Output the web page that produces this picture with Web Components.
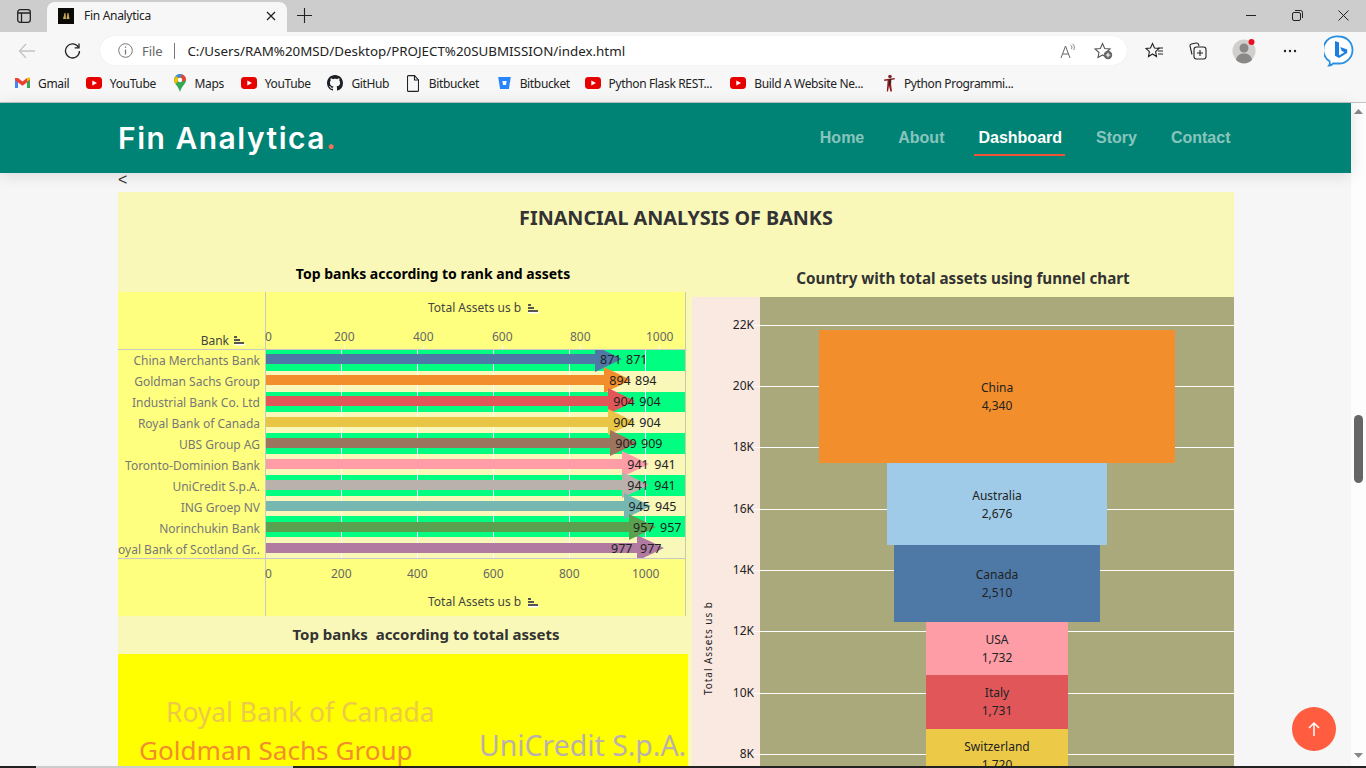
<!DOCTYPE html>
<html lang="en"><head><meta charset="utf-8"><title>Fin Analytica</title>
<style>
html,body{margin:0;padding:0;width:1366px;height:768px;overflow:hidden;background:#f6f6f6}
fa-app{display:block;width:1366px;height:768px}
</style></head><body>
<fa-app>
  <fa-tabstrip></fa-tabstrip>
  <fa-toolbar></fa-toolbar>
  <fa-bookmarks></fa-bookmarks>
  <fa-viewport>
    <fa-site-header></fa-site-header>
    <fa-dashboard></fa-dashboard>
  </fa-viewport>
  <fa-taskline></fa-taskline>
</fa-app>
<script>
const define=(name,css,html)=>{customElements.define(name,class extends HTMLElement{
  constructor(){super();const r=this.attachShadow({mode:'open'});r.innerHTML=`<style>${css}</style>${typeof html==='function'?html():html}`;}
});};
const UI='"Noto Sans","Open Sans",sans-serif';
const yt=`<svg width="16" height="16" viewBox="0 0 16 16"><rect y="2" width="16" height="12" rx="3.4" fill="#e60000"/><path d="M6.3 5.4 11 8l-4.7 2.6z" fill="#fff"/></svg>`;
const gmail=`<svg width="15" height="16" viewBox="0 0 15 16"><path d="M0 4v9h3V6.5z" fill="#4285f4"/><path d="M15 4v9h-3V6.5z" fill="#34a853"/><path d="M12 3 7.5 6.6 3 3 0 3v2l3 2.4 4.5 3.4 4.5-3.4L15 5V3z" fill="#ea4335"/><path d="M12 3.1v3.5L15 4.4V3.3c0-.9-2-1-3-.2z" fill="#fbbc04"/></svg>`;
const maps=`<svg width="14" height="18" viewBox="0 0 14 18"><path d="M7 0a6 6 0 0 1 6 6c0 4-4.500 6-6 12C5.500 12 1 10 1 6a6 6 0 0 1 6-6z" fill="#34a853"/><path d="M3 2 1 6c0 1.500.8 2.800 1.700 4l4-5z" fill="#fbbc04"/><path d="M3 2a6 6 0 0 1 6-1.700L6.500 4z" fill="#4285f4"/><path d="M9 .3A6 6 0 0 1 13 6L9 8 7.500 4z" fill="#ea4335"/><circle cx="7" cy="6" r="2.200" fill="#fff"/></svg>`;
const gh=`<svg width="16" height="16" viewBox="0 0 16 16"><path fill="#1b1f23" d="M8 0C3.580 0 0 3.580 0 8c0 3.540 2.290 6.530 5.470 7.590.4.070.55-.17.55-.38 0-.19-.01-.82-.01-1.490-2.010.37-2.530-.49-2.690-.94-.09-.23-.48-.94-.82-1.130-.28-.15-.68-.52-.01-.53.63-.01 1.080.58 1.230.82.72 1.210 1.870.87 2.330.66.07-.52.28-.87.51-1.070-1.780-.2-3.640-.89-3.640-3.950 0-.87.31-1.590.82-2.150-.08-.2-.36-1.020.08-2.120 0 0 .67-.21 2.200.82.64-.18 1.320-.27 2-.27.68 0 1.360.09 2 .27 1.530-1.040 2.200-.82 2.200-.82.44 1.100.16 1.920.08 2.120.51.56.82 1.270.82 2.150 0 3.070-1.870 3.750-3.650 3.950.29.25.54.73.54 1.480 0 1.070-.01 1.930-.01 2.200 0 .21.15.46.55.38A8.013 8.013 0 0 0 16 8c0-4.420-3.580-8-8-8z"/></svg>`;
const doc=`<svg width="12" height="17" viewBox="0 0 12 17" fill="none" stroke="#222" stroke-width="1.100"><path d="M1.500.6h6l4 4.400v10.400a1 1 0 0 1-1 1h-9a1 1 0 0 1-1-1V1.600a1 1 0 0 1 1-1z"/><path d="M7.500.6v4.400h4"/></svg>`;
const bb=`<svg width="13" height="14" viewBox="0 0 13 14"><path d="M.2 1h12.600l-1.900 12H2.100z" fill="#2684ff"/><path d="M4.400 5h4.200l-.6 4H5z" fill="#fff"/></svg>`;
const fig=`<svg width="13" height="18" viewBox="0 0 13 18"><circle cx="7" cy="2.500" r="1.800" fill="#7a2a2a"/><path d="M1 5.500 6 4.700l5.500-.7.500 1.200-3.700.8-.2 4.500L9 17.500H7.400L6 12l-1 5.500H3.800l.8-11L1.300 7z" fill="#8c1d1d"/><path d="M6.500 5h1.400L7 11H5.800z" fill="#222"/></svg>`;

define('fa-tabstrip',`
:host{display:flex;height:32px;background:#cdcdcd;font:12px ${UI};color:#222;position:relative;align-items:flex-end}
.side{width:47px;height:32px;display:flex;align-items:center;justify-content:center}
.tab{width:240px;height:30px;background:#f7f7f7;border-radius:8px 8px 0 0;display:flex;align-items:center;box-sizing:border-box;padding:0 0 3px 11px}
.fav{width:16px;height:16px;background:#0c0a06;display:flex;align-items:center;justify-content:center;margin-right:10px}
.t{flex:1;letter-spacing:-.3px}
.x{width:21px;display:flex;justify-content:flex-start}
.plus{width:34px;height:32px;display:flex;align-items:center;justify-content:center;padding-bottom:2px;box-sizing:border-box}
.sp{flex:1}
.win{display:flex;height:32px;align-items:center;width:120px;justify-content:space-between;padding:0 17px 2px 0;box-sizing:border-box}
`,`
<div class="side"><svg width="16" height="16" viewBox="0 0 16 16" fill="none" stroke="#222" stroke-width="1.300"><rect x="1.700" y="1.700" width="12.600" height="12.600" rx="2.500"/><path d="M2 5h12M5.500 5v9"/></svg></div>
<div class="tab"><span class="fav"><svg width="8" height="8" viewBox="0 0 8 8"><path d="M1 7 2.500 1h1L4 7zM4.500 7 5.500 1h1L7.500 7z" fill="#c9a95a"/></svg></span><span class="t">Fin Analytica</span><span class="x"><svg width="10" height="10" viewBox="0 0 10 10" stroke="#222" stroke-width="1.300"><path d="M1 1l8 8M9 1l-8 8"/></svg></span></div>
<div class="plus"><svg width="15" height="15" viewBox="0 0 15 15" stroke="#222" stroke-width="1.100"><path d="M7.500 0v15M0 7.500h15"/></svg></div>
<div class="sp"></div>
<div class="win">
<svg width="10" height="10" viewBox="0 0 10 10" stroke="#222"><path d="M0 5.500h10"/></svg>
<svg width="11" height="11" viewBox="0 0 11 11" fill="none" stroke="#222"><rect x=".5" y="2.500" width="8" height="8" rx="1.500"/><path d="M3 .5h5.500a2 2 0 0 1 2 2V8"/></svg>
<svg width="11" height="11" viewBox="0 0 11 11" stroke="#222"><path d="M.5.500l10 10M10.500.500l-10 10"/></svg>
</div>`);

define('fa-toolbar',`
:host{display:flex;height:34px;background:#f7f7f7;align-items:center;font:13px ${UI};color:#222;box-sizing:border-box;padding-top:3px}
.b{display:flex;align-items:center;justify-content:center;flex:none}
.addr{width:1027px;height:29px;background:#fff;border-radius:15px;display:flex;align-items:center;box-shadow:0 0 1px rgba(0,0,0,.12);margin:0 17px 0 10px;box-sizing:border-box;padding-left:18px;flex:none}
.file{color:#666;margin-left:9px;font-size:13px;letter-spacing:-.1px}
.bar{width:1px;height:16px;background:#777;margin:0 12px}
.url{flex:1;font-size:13.350px;white-space:nowrap}
.end{display:flex;gap:18px;padding-right:14px;align-items:center}
.right{display:flex;align-items:center}
`,`
<span class="b" style="width:54px"><svg width="18" height="16" viewBox="0 0 18 16" fill="none" stroke="#c4c4c4" stroke-width="1.300"><path d="M17 8H1.500M8 1 1.500 8 8 15"/></svg></span>
<span class="b" style="width:36px"><svg width="17" height="17" viewBox="0 0 17 17" fill="none" stroke="#222" stroke-width="1.300"><path d="M14.600 5.500A7 7 0 1 0 15.500 9"/><path d="M15 1.500v4.300h-4.300"/></svg></span>
<div class="addr">
<svg width="15" height="15" viewBox="0 0 15 15" fill="none" stroke="#777"><circle cx="7.500" cy="7.500" r="6.800"/><path d="M7.500 6.500v5" stroke-width="1.300"/><path d="M7.500 3.500v1.300" stroke-width="1.300"/></svg>
<span class="file">File</span><span class="bar"></span><span class="url">C:/Users/RAM%20MSD/Desktop/PROJECT%20SUBMISSION/index.html</span>
<span class="end">
<svg width="16" height="16" viewBox="0 0 16 16" fill="none" stroke="#666" stroke-width="1"><path d="M1 15 5.500 3 10 15M2.800 11h5.500"/><path d="M10.500 2c1.500.8 1.800 2.500 1 4M12.500.8c2 1.400 2.500 4 1.200 6.200" stroke-width=".8"/></svg>
<svg width="19" height="18" viewBox="0 0 19 18" fill="none" stroke="#555" stroke-width="1.100"><path d="M8.500 1.500 10.700 6.500 16 7 12 10.500 13 15.500 8.500 13 4 15.500 5 10.500 1 7 6.300 6.500z"/><circle cx="14" cy="13" r="4.200" fill="#666" stroke="none"/><path d="M14 10.800v4.400M11.800 13h4.400" stroke="#fff"/></svg>
</span></div>
<div class="right">
<span class="b" style="width:20px"><svg width="19" height="18" viewBox="0 0 19 18" fill="none" stroke="#222" stroke-width="1.100"><path d="M7.500 1.500 9.500 6 14 6.500 10.600 9.700 11.500 14.500 7.500 12 3.500 14.500 4.400 9.700 1 6.500 5.500 6z"/><path d="M13 9h5M13 12h5M13 6h5"/></svg></span>
<span class="b" style="width:20px;margin-left:23px"><svg width="19" height="19" viewBox="0 0 19 19" fill="none" stroke="#222" stroke-width="1.100"><path d="M4 13.500 2 5c-.2-1 .4-1.800 1.300-2l5-1c1-.2 1.800.3 2.200 1.200L11 5"/><rect x="6" y="6" width="12" height="12" rx="2.500" fill="#f7f7f7"/><path d="M12 9v6M9 12h6"/></svg></span>
<span class="b" style="width:24px;margin-left:25px;position:relative"><svg width="24" height="26" viewBox="0 0 24 26"><circle cx="12" cy="13" r="11.500" fill="#d1cfcd"/><circle cx="12" cy="10" r="4.500" fill="#8a8886"/><path d="M4 22c1-5 4-6.500 8-6.500s7 1.500 8 6.500a11 11 0 0 1-16 0z" fill="#8a8886"/><circle cx="19.500" cy="4" r="3" fill="#e81123"/></svg></span>
<span class="b" style="width:20px;margin-left:24px"><svg width="14" height="4" viewBox="0 0 14 4" fill="#222"><circle cx="2" cy="2" r="1.200"/><circle cx="7" cy="2" r="1.200"/><circle cx="12" cy="2" r="1.200"/></svg></span>
<span class="b" style="width:30px;margin-left:24px"><svg width="30" height="32" viewBox="0 0 30 32"><path d="M15 1.500a13.500 13.500 0 0 1 13.500 13.500c0 7.500-6 13.500-13.500 13.500H9c-1 1.500-2.500 2.200-4 2.200 1-1.200 1-3 .5-4.500A13.500 13.500 0 0 1 15 1.500z" fill="#fff" stroke="#2a8fe0" stroke-width="1.800"/><path d="M11 6l4 1.500v13l5.500-3.200-2.700-1.300-1.600-4 7 2.500v3.500L15 23l-4-2.300z" fill="#1a7fe0"/></svg></span>
</div>`);

const marks=[[gmail,'Gmail'],[yt,'YouTube'],[maps,'Maps'],[yt,'YouTube'],[gh,'GitHub'],[doc,'Bitbucket','margin-left:1px;gap:10px'],[bb,'Bitbucket','margin-left:2px;gap:9px'],[yt,'Python Flask REST...','margin-left:-2px'],[yt,'Build A Website Ne...','margin-left:1.400px'],[fig,'Python Programmi...','margin-left:3px']];
define('fa-bookmarks',`
:host{display:flex;height:37px;background:#f7f7f7;align-items:center;padding:0 0 2px 15px;box-sizing:border-box;font:12px ${UI};color:#222;gap:16.700px;border-bottom:1px solid #c4c4c4;letter-spacing:-.35px}
.i{display:flex;align-items:center;gap:8px;white-space:nowrap}
svg{display:block;flex:none}
`,()=>marks.map(m=>`<span class="i" style="${m[2]||''}">${m[0]}<span>${m[1]}</span></span>`).join(''));

define('fa-viewport',`
:host{display:flex;flex-direction:column;height:663px;width:1351px;background:#f6f6f6;position:relative;overflow:visible}
::slotted(*){flex:none}
.bar{position:absolute;left:1351px;top:0;bottom:0;width:15px;background:#fdfdfd;display:flex;flex-direction:column;align-items:center;justify-content:space-between;padding:6px 0 8px;box-sizing:border-box}
.thumb{position:absolute;left:3px;top:312px;width:9px;height:68px;border-radius:5px;background:#666}
.up{position:absolute;left:1292px;top:604px;width:44px;height:44px;border-radius:50%;background:#ff5c40;display:flex;align-items:center;justify-content:center;z-index:3}
`,`<slot></slot>
<div class="bar"><svg width="9" height="5" viewBox="0 0 9 5"><path d="M4.500 0 9 5H0z" fill="#888"/></svg><span class="thumb"></span><svg width="9" height="5" viewBox="0 0 9 5"><path d="M4.500 5 9 0H0z" fill="#888"/></svg></div>
<div class="up"><svg width="12" height="14" viewBox="0 0 12 14" fill="none" stroke="#fff" stroke-width="1.500"><path d="M6 14V1M1 6l5-5 5 5"/></svg></div>`);

define('fa-site-header',`
:host{display:flex;height:70px;background:#008374;align-items:center;justify-content:space-between;padding:0 118.500px 0 118px;box-shadow:0 2px 15px rgba(0,0,0,.12);position:relative;z-index:2;box-sizing:border-box;width:1351px}
.brand{font:600 30px "Inter","Open Sans",sans-serif;color:#fff;letter-spacing:1.5px}
.brand b{color:#f96f59;font-weight:600}
nav{display:flex;gap:30px;font:bold 16px "Liberation Sans",Arial,sans-serif;color:rgba(255,255,255,.55)}
a{position:relative;padding:8px 2px}
a.on{color:#fff}
a.on::after{content:"";position:absolute;left:-2px;right:-1px;bottom:-1px;height:2px;background:#f0533a}
`,`<div class="brand">Fin Analytica<b>.</b></div><nav><a>Home</a><a>About</a><a class="on">Dashboard</a><a>Story</a><a>Contact</a></nav>`);

define('fa-dashboard',`
:host{display:block;width:1116px;margin-left:118px;font-family:${UI};position:relative}
.lt{height:19px;font:16px/14px "Liberation Sans",sans-serif;color:#333}
.board{background:#f9f8b9;height:576px;overflow:hidden;display:flex;flex-direction:column}
h1{margin:0;height:52px;text-align:center;font:bold 19.750px/52px ${UI};color:#333;flex:none}
.cols{display:flex;gap:4px;flex:1;min-height:0}
.l{width:570px;flex:none;display:flex;flex-direction:column}
.r{width:542px;flex:none;display:flex;flex-direction:column}
.tt{height:48px;width:630px;text-align:center;font:bold 14px/60px ${UI};color:#000;flex:none}
.st{height:38px;text-align:center;font:bold 15px/36px ${UI};color:#333;flex:none;padding-left:46px;box-sizing:border-box}
.rt{height:53px;text-align:center;font:bold 15.200px/68px ${UI};color:#333;flex:none}
`,`<div class="lt">&lt;</div><div class="board"><h1>FINANCIAL ANALYSIS OF BANKS</h1>
<div class="cols"><div class="l"><div class="tt">Top banks according to rank and assets</div><fa-bar-chart></fa-bar-chart><div class="st">Top banks&nbsp; according to total assets</div><fa-wordcloud></fa-wordcloud></div>
<div class="r"><div class="rt">Country with total assets using funnel chart</div><fa-funnel></fa-funnel></div></div></div>`);

const sort=`<svg width="12" height="11" viewBox="0 0 12 11"><rect x="1" y="1" width="3" height="2" fill="#555"/><rect x="1" y="4" width="6" height="2" fill="#555"/><rect x="1" y="7" width="10" height="2" fill="#555"/><rect x="1" y="9" width="11" height="1.500" fill="#fff"/></svg>`;
const rows=[
['China Merchants Bank',871,'#4e79a7',595,600,626],
['Goldman Sachs Group',894,'#f28e2b',604,609.3,635],
['Industrial Bank Co. Ltd',904,'#e15759',608,613.3,639.3],
['Royal Bank of Canada',904,'#e9c546',608,613.3,639.3],
['UBS Group AG',909,'#9c755f',610,615.3,641],
['Toronto-Dominion Bank',941,'#ff9da7',622,627.3,654.3],
['UniCredit S.p.A.',941,'#bab0ac',622,627.3,654.3],
['ING Groep NV',945,'#76b7b2',624,628.5,655],
['Norinchukin Bank',957,'#59a14f',629,633,660],
['Royal Bank of Scotland Gr..',977,'#b07aa1',636.7,611,640]];
define('fa-bar-chart',`
:host{display:grid;grid-template-columns:147px 420px;grid-template-rows:58px 208px 58px;width:568px;height:324px;background:#ffff7f;font:12px ${UI};color:#555;flex:none;border-right:1px solid #c9c9b0;box-sizing:border-box;position:relative}
.hl{display:flex;align-items:flex-end;justify-content:flex-end;color:#444;padding:0 20px 0 0;border-bottom:1px solid #c8c8c8;border-right:1px solid #c8c8c8;box-sizing:border-box;grid-column:1;grid-row:1;width:148px}
.hl span{display:flex;align-items:center;gap:4px}
.axis{position:relative;border-bottom:1px solid #c8c8c8;box-sizing:border-box;grid-column:2;grid-row:1;margin-left:1px;width:419px}
.names{grid-column:1;grid-row:2;display:flex;flex-direction:column;height:208px;overflow:hidden;width:147px;color:#777}
.names div{flex:none;height:21px;display:flex;align-items:center;justify-content:flex-end;padding-right:5px;white-space:nowrap;box-sizing:border-box}
.names span{flex:none}
.track{grid-column:2;grid-row:2;position:relative;overflow:hidden;height:208px;display:flex;flex-direction:column;border-left:1px solid #c8c8c8;width:420px;box-sizing:border-box}
.row{flex:1;min-height:0;background:#f9f8b9;position:relative}
.row:nth-child(odd){background:#00ff80}
.g{position:absolute;top:0;bottom:0;width:1px;background:#fff;z-index:0}
.bar{position:absolute;left:0;top:calc(4px + var(--o));height:10px;z-index:1}
.tri{position:absolute;top:calc(var(--o) - 4px);width:0;height:0;border-left:27px solid;border-top:13px solid transparent;border-bottom:13px solid transparent;z-index:1}
.v{position:absolute;top:var(--o);line-height:19px;color:#222;z-index:2;font-size:12.500px}
.foot{position:relative;grid-column:1/3;grid-row:3;border-top:1px solid #c8c8c8;box-sizing:border-box;height:58px}
.foot::before{content:"";position:absolute;left:147px;top:0;bottom:0;width:1px;background:#c8c8c8}
.n{position:absolute;color:#666;line-height:14px}
.tk{position:absolute;bottom:0;width:1px;height:4px;background:#fff}
.ttl{position:absolute;left:310px;display:flex;gap:6px;align-items:center;color:#444;white-space:nowrap;line-height:14px}
`,()=>{
 const top=[[0,-1],[200,68],[400,147],[600,226],[800,304],[1000,380]];
 const topTk=[78,157,236,314,393];
 const bot=[[0,147],[200,213],[400,289],[600,365],[800,441],[1000,514]];
 return `<div class="hl"><span>Bank ${sort}</span></div>
 <div class="axis"><div class="ttl" style="left:162px;top:9px">Total Assets us b ${sort}</div>
 ${top.map(([t,x])=>`<span class="n" style="left:${x}px;top:38px">${t}</span>`).join('')}${topTk.map(x=>`<i class="tk" style="left:${x}px"></i>`).join('')}</div>
 <div class="names">${rows.map(r=>`<div><span>${r[0]}</span></div>`).join('')}</div>
 <div class="track">${rows.map((r,i)=>`<div class="row" style="--o:${(i*.2).toFixed(1)}px">
   <span class="bar" style="width:${r[3]-266}px;background:${r[2]}"></span>
   <span class="tri" style="left:${r[3]-266}px;border-left-color:${r[2]}"></span>
   <span class="v" style="left:${r[4]-266}px">${r[1]}</span><span class="v" style="left:${r[5]-266}px">${r[1]}</span></div>`).join('')}
   ${[75,151,227,303,379].map(x=>`<i class="g" style="left:${x}px"></i>`).join('')}</div>
 <div class="foot">${bot.map(([t,x])=>`<span class="n" style="left:${x}px;top:8px">${t}</span>`).join('')}
 <div class="ttl" style="top:36px">Total Assets us b ${sort}</div></div>`;});

define('fa-wordcloud',`
:host{display:block;height:200px;background:#ffff00;position:relative;overflow:hidden;font-family:${UI}}
span{position:absolute;white-space:nowrap;line-height:1}
`,`<span style="left:48px;top:45px;font-size:26.400px;color:#edc948">Royal Bank of Canada</span>
<span style="left:21px;top:83px;font-size:26.100px;color:#f28e2b">Goldman Sachs Group</span>
<span style="left:361px;top:77px;font-size:28.400px;color:#bab0ac">UniCredit S.p.A.</span>`);

const blocks=[['China','4,340',356,133,'#f28e2b'],['Australia','2,676',220,82,'#a0cbe8','padding-top:2px'],['Canada','2,510',206,77,'#4e79a7'],['USA','1,732',142,53,'#ff9da7'],['Italy','1,731',142,54,'#e15759'],['Switzerland','1,720',142,54,'#edc948']];
const ticks=[['22K',28],['20K',89],['18K',150],['16K',212],['14K',273],['12K',334],['10K',396],['8K',457]];
define('fa-funnel',`
:host{display:flex;height:500px;font:12px ${UI};color:#222;flex:none}
.ax{width:68px;background:#fae9e1;position:relative;flex:none}
.ax span{position:absolute;right:6px;line-height:14px;transform:translateY(-7px);color:#222}
.ax b{position:absolute;right:0;width:6px;height:1px;background:#fff}
.lab{position:absolute;left:9px;top:304px;height:95px;writing-mode:vertical-rl;transform:rotate(180deg);font:10px/14px ${UI};letter-spacing:.95px;white-space:nowrap;text-align:center;color:#222}
.plot{flex:1;background:#a9a97b;position:relative;display:flex;flex-direction:column;align-items:center;padding:33px 0 0;box-sizing:border-box;overflow:hidden}
.gl{position:absolute;left:0;right:0;height:1px;background:#fff}
.f{position:relative;flex:none;display:flex;flex-direction:column;align-items:center;justify-content:center;line-height:18px;text-align:center;box-sizing:border-box}
`,`<div class="ax"><div class="lab">Total Assets us b</div>${ticks.map(([t,y])=>`<span style="top:${y}px">${t}</span><b style="top:${y}px"></b>`).join('')}</div>
<div class="plot">${ticks.map(([t,y])=>`<i class="gl" style="top:${y}px"></i>`).join('')}${blocks.map(b=>`<div class="f" style="width:${b[2]}px;height:${b[3]}px;background:${b[4]};${b[5]||''}"><span>${b[0]}</span><span>${b[1]}</span></div>`).join('')}</div>`);

define('fa-taskline',`
:host{display:flex;height:2px;background:#222;position:relative;z-index:4}
i{margin-left:36px;width:257px;background:#ccc}
`,`<i></i>`);
customElements.define('fa-app',class extends HTMLElement{constructor(){super();this.attachShadow({mode:'open'}).innerHTML='<style>:host{display:block}</style><slot></slot>';}});
</script>
</body></html>
